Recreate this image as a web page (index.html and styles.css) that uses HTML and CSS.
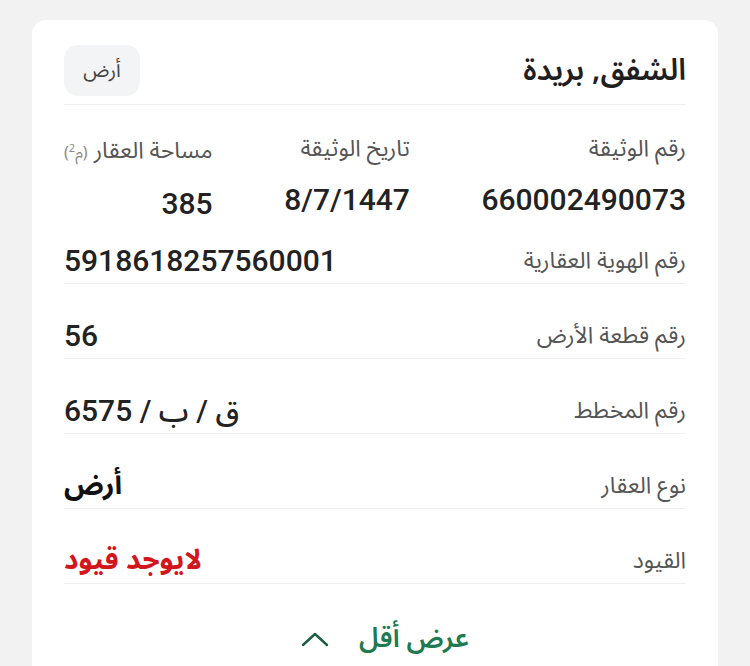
FILE: index.html
```html
<!DOCTYPE html>
<html lang="ar" dir="rtl">
<head>
    <meta charset="UTF-8">
    <meta name="viewport" content="width=device-width, initial-scale=1.0">
    <title>تفاصيل العقار</title>
    <link rel="stylesheet" href="styles.css">
</head>
<body>
    <div class="tarjeta">
        <!-- Cabecera: nombre del barrio y tipo -->
        <div class="cabecera">
            <h1 class="titulo">الشفق, بريدة</h1>
            <span class="etiqueta">أرض</span>
        </div>

        <!-- Tres datos en una línea -->
        <div class="resumen">
            <div class="dato">
                <p class="nombre">رقم الوثيقة</p>
                <p class="valor num">660002490073</p>
            </div>
            <div class="dato">
                <p class="nombre">تاريخ الوثيقة</p>
                <p class="valor num">8/7/1447</p>
            </div>
            <div class="dato">
                <p class="nombre">مساحة العقار <span class="unidad">(م<sup>2</sup>)</span></p>
                <p class="valor num">385</p>
            </div>
        </div>

        <!-- Resto de filas -->
        <div class="fila primera">
            <span class="nombre">رقم الهوية العقارية</span>
            <span class="valor num">5918618257560001</span>
        </div>
        <div class="fila">
            <span class="nombre">رقم قطعة الأرض</span>
            <span class="valor num">56</span>
        </div>
        <div class="fila">
            <span class="nombre">رقم المخطط</span>
            <span class="valor num">ق / ب / 6575</span>
        </div>
        <div class="fila">
            <span class="nombre">نوع العقار</span>
            <span class="valor texto">أرض</span>
        </div>
        <div class="fila">
            <span class="nombre">القيود</span>
            <span class="valor texto rojo">لايوجد قيود</span>
        </div>

        <button class="menos">
            <span>عرض أقل</span>
            <svg width="28" height="16" viewBox="0 0 28 16" fill="none">
                <path d="M2 14 L14 3 L26 14" stroke="#1e5c43" stroke-width="2.4" stroke-linecap="round" stroke-linejoin="round"/>
            </svg>
        </button>
    </div>
</body>
</html>
```

FILE: styles.css
```css
body {
    margin: 0;
    background: #f2f2f3;
    font-family: "Noto Sans Arabic", "DejaVu Sans", sans-serif;
    color: #222;
}
.tarjeta {
    margin: 20px 32px 0 32px;
    background: #fff;
    border-radius: 14px 14px 0 0;
    padding: 0 32px;
    min-height: 646px;
    box-sizing: border-box;
}
.cabecera {
    display: flex;
    justify-content: space-between;
    align-items: center;
    padding: 25px 0 8px 0;
    border-bottom: 1px solid #f0f0f0;
}
.titulo {
    margin: 0;
    font-size: 30px;
    line-height: 40px;
    font-weight: 600;
    color: #1f1f1f;
}
.etiqueta {
    display: flex;
    align-items: center;
    justify-content: center;
    width: 76px;
    height: 51px;
    border-radius: 14px;
    background: #f3f4f5;
    font-size: 20px;
    color: #444;
}
p {
    margin: 0;
}
.resumen {
    display: flex;
    justify-content: space-between;
    padding-top: 30px;
}
.nombre {
    font-size: 23px;
    line-height: 28px;
    color: #555;
}
.unidad {
    font-size: 16px;
    color: #8a8a8a;
}
.unidad sup {
    font-size: 11px;
}
.valor {
    color: #222;
}
.num {
    font-family: Roboto, "Noto Sans Arabic", "DejaVu Sans", sans-serif;
    font-size: 30px;
    font-weight: 500;
    line-height: 30px;
}
.resumen .valor {
    margin-top: 22px;
}
.texto {
    font-size: 28px;
    font-weight: 700;
    line-height: 30px;
    color: #111;
}
.rojo {
    color: #d3161d;
}
.fila {
    display: flex;
    justify-content: space-between;
    align-items: center;
    height: 30px;
    padding: 37px 0 7px 0;
    border-bottom: 1px solid #f0f0f0;
}
.fila.primera {
    padding-top: 27px;
}
.menos {
    display: flex;
    align-items: center;
    justify-content: center;
    gap: 30px;
    width: 100%;
    margin-top: 40px;
    padding: 0 0 0 20px;
    border: none;
    background: none;
    font-family: "Noto Sans Arabic", "DejaVu Sans", sans-serif;
    font-size: 27px;
    line-height: 30px;
    font-weight: 600;
    color: #1e7a50;
}
```
